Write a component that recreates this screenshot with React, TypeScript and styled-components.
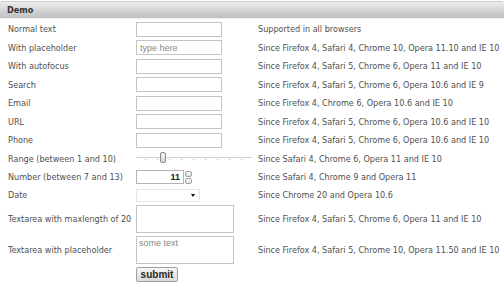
import React from 'react';
import styled, { createGlobalStyle } from 'styled-components';

const GlobalStyle = createGlobalStyle`
  html, body {
    margin: 0;
    padding: 0;
    background: #fff;
  }
  body {
    font-family: 'DejaVu Sans Condensed', 'DejaVu Sans', sans-serif;
    font-size: 9px;
    color: #505050;
  }
`;

const Panel = styled.div`
  width: 504px;
  height: 283px;
  overflow: hidden;
  padding-top: 1px;
  box-sizing: border-box;
`;

const Header = styled.div`
  height: 18px;
  box-sizing: border-box;
  border-top: 1px solid #cacaca;
  border-bottom: 1px solid #f0f0f0;
  border-radius: 3px 3px 0 0;
  background: linear-gradient(#efefef 0%, #e3e3e3 20%, #cbcbcb 70%, #c0c0c0 100%);
  display: flex;
  align-items: center;
  padding-left: 7px;
  font-weight: bold;
  font-size: 9px;
  color: #333;
`;

const Form = styled.form`
  margin: 0;
  padding: 1px 0 0 8px;
  display: flex;
  flex-direction: column;
`;

const Row = styled.div<{ $h: number }>`
  display: grid;
  grid-template-columns: 128px 122px 1fr;
  align-items: center;
  height: ${(p) => p.$h}px;
`;

const Label = styled.label`
  white-space: nowrap;
`;

const Note = styled.span`
  white-space: nowrap;
`;

const Cell = styled.div`
  display: flex;
  align-items: center;
  position: relative;
`;

const TextInput = styled.input`
  width: 86px;
  height: 15px;
  box-sizing: border-box;
  margin: 0;
  padding: 0 3px;
  border: 1px solid #c4c4c4;
  border-radius: 0;
  font-family: 'Liberation Sans', Arial, sans-serif;
  font-size: 9px;
  color: #333;
  outline: none;
  -webkit-appearance: none;
  appearance: none;
  &::placeholder {
    color: #8a8a8a;
  }
`;

const NumberInput = styled(TextInput)`
  width: 48px;
  height: 14px;
  text-align: right;
  font-weight: bold;
  color: #222;
  border: 1px solid #b4b4b4;
  -moz-appearance: textfield;
  &::-webkit-inner-spin-button,
  &::-webkit-outer-spin-button {
    -webkit-appearance: none;
    margin: 0;
  }
`;

const Spinner = styled.div`
  display: flex;
  flex-direction: column;
  gap: 1px;
  margin-left: 1px;
`;

const SpinButton = styled.span`
  display: block;
  width: 7px;
  height: 6px;
  box-sizing: border-box;
  border: 1px solid #a0a0a0;
  border-radius: 2px;
  background: linear-gradient(#fafafa, #e2e2e2);
`;

const Range = styled.input`
  width: 116px;
  height: 12px;
  margin: 0;
  -webkit-appearance: none;
  appearance: none;
  background: transparent;
  &::-webkit-slider-runnable-track {
    height: 3px;
    background:
      linear-gradient(#d0d0d0, #d0d0d0) 0 0 / 100% 1px no-repeat,
      repeating-linear-gradient(90deg, transparent 0 9px, #b8b8b8 9px 10px, transparent 10px 12px) 0 2px / 100% 1px no-repeat;
  }
  &::-webkit-slider-thumb {
    -webkit-appearance: none;
    width: 6px;
    height: 11px;
    margin-top: -5px;
    border: 1px solid #8c8c8c;
    border-radius: 2px;
    background: linear-gradient(#f4f4f4, #d6d6d6);
    box-sizing: border-box;
  }
`;

const DateSelect = styled.select`
  width: 64px;
  height: 13px;
  box-sizing: border-box;
  margin: 0;
  padding: 0;
  border: 1px solid #e4e4e4;
  border-radius: 0;
  background: #fff;
  -webkit-appearance: none;
  appearance: none;
  outline: none;
`;

const Caret = styled.span`
  position: absolute;
  left: 55px;
  top: 50%;
  transform: translateY(-30%);
  width: 0;
  height: 0;
  border-left: 2.5px solid transparent;
  border-right: 2.5px solid transparent;
  border-top: 3px solid #111;
  pointer-events: none;
`;

const TextArea = styled.textarea`
  width: 98px;
  height: 28px;
  box-sizing: border-box;
  margin: 0;
  padding: 1px 2px;
  border: 1px solid #c4c4c4;
  border-radius: 0;
  resize: none;
  font-family: 'Liberation Sans', Arial, sans-serif;
  font-size: 9px;
  color: #333;
  outline: none;
  &::placeholder {
    color: #8a8a8a;
  }
`;

const SubmitButton = styled.button`
  width: 42px;
  height: 15px;
  margin: 0;
  padding: 0;
  border: 1px solid #a0a0a0;
  border-radius: 2px;
  background: linear-gradient(#f6f6f6, #dadada);
  font-family: 'Liberation Sans', Arial, sans-serif;
  font-size: 10px;
  font-weight: bold;
  color: #2a2a2a;
  line-height: 13px;
`;

type Field = {
  label: string;
  note: string;
  type: string;
  placeholder?: string;
};

const textFields: Field[] = [
  { label: 'Normal text', note: 'Supported in all browsers', type: 'text' },
  {
    label: 'With placeholder',
    note: 'Since Firefox 4, Safari 4, Chrome 10, Opera 11.10 and IE 10',
    type: 'text',
    placeholder: 'type here',
  },
  { label: 'With autofocus', note: 'Since Firefox 4, Safari 5, Chrome 6, Opera 11 and IE 10', type: 'text' },
  { label: 'Search', note: 'Since Firefox 4, Safari 5, Chrome 6, Opera 10.6 and IE 9', type: 'search' },
  { label: 'Email', note: 'Since Firefox 4, Chrome 6, Opera 10.6 and IE 10', type: 'email' },
  { label: 'URL', note: 'Since Firefox 4, Safari 5, Chrome 6, Opera 10.6 and IE 10', type: 'url' },
  { label: 'Phone', note: 'Since Firefox 4, Safari 5, Chrome 6, Opera 10.6 and IE 10', type: 'tel' },
];

const App: React.FC = () => {
  return (
    <>
      <GlobalStyle />
      <Panel>
        <Header>Demo</Header>
        <Form onSubmit={(e) => e.preventDefault()}>
          {textFields.map((f) => (
            <Row key={f.label} $h={18.5}>
              <Label>{f.label}</Label>
              <Cell>
                <TextInput type={f.type} placeholder={f.placeholder} />
              </Cell>
              <Note>{f.note}</Note>
            </Row>
          ))}
          <Row $h={18.5}>
            <Label>Range (between 1 and 10)</Label>
            <Cell>
              <Range type="range" min={1} max={10} defaultValue={3} />
            </Cell>
            <Note>Since Safari 4, Chrome 6, Opera 11 and IE 10</Note>
          </Row>
          <Row $h={18.5}>
            <Label>Number (between 7 and 13)</Label>
            <Cell>
              <NumberInput type="number" min={7} max={13} defaultValue={11} />
              <Spinner>
                <SpinButton />
                <SpinButton />
              </Spinner>
            </Cell>
            <Note>Since Safari 4, Chrome 9 and Opera 11</Note>
          </Row>
          <Row $h={17}>
            <Label>Date</Label>
            <Cell>
              <DateSelect defaultValue="">
                <option value="" />
              </DateSelect>
              <Caret />
            </Cell>
            <Note>Since Chrome 20 and Opera 10.6</Note>
          </Row>
          <Row $h={31}>
            <Label>Textarea with maxlength of 20</Label>
            <Cell>
              <TextArea maxLength={20} />
            </Cell>
            <Note>Since Firefox 4, Safari 5, Chrome 6, Opera 11 and IE 10</Note>
          </Row>
          <Row $h={31}>
            <Label>Textarea with placeholder</Label>
            <Cell>
              <TextArea placeholder="some text" />
            </Cell>
            <Note>Since Firefox 4, Safari 5, Chrome 10, Opera 11.50 and IE 10</Note>
          </Row>
          <Row $h={17}>
            <span />
            <Cell>
              <SubmitButton type="submit">submit</SubmitButton>
            </Cell>
            <span />
          </Row>
        </Form>
      </Panel>
    </>
  );
};

export default App;
